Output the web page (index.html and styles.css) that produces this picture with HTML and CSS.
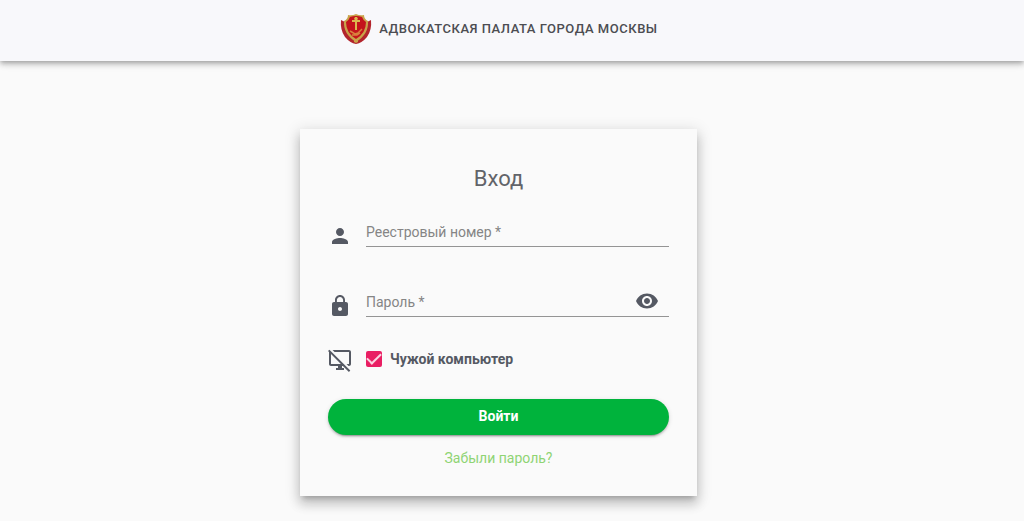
FILE: index.html
```html
<!DOCTYPE html>
<html lang="ru">
<head>
  <meta charset="UTF-8" />
  <meta name="viewport" content="width=device-width, initial-scale=1.0" />
  <title>Вход - Адвокатская палата города Москвы</title>
  <link rel="stylesheet" href="styles.css">
</head>
<body>
  <header class="header">
    <svg class="logo" viewBox="0 0 32 32" aria-hidden="true">
      <path fill="#b3242c" d="M1 7 L5 9 L27 9 L31 7 Q32 17 27 24 Q22 30 16 31 Q10 30 5 24 Q0 17 1 7z"/>
      <path fill="#c9a24a" d="M8 2 Q12 3 16 1 Q20 3 24 2 Q24 6 28 8 Q29 21 16 29 Q3 21 4 8 Q8 6 8 2z"/>
      <path fill="#c4141c" d="M10 4 Q16 2 22 4 Q23 7 26 9 Q26 20 16 26 Q6 20 6 9 Q9 7 10 4z"/>
      <path fill="#dcb84f" d="M15 4h2l1 2-1 1h3v2h-3v8h-2V9h-3V7h3l-1-1z"/>
      <path fill="none" stroke="#d9803d" stroke-width="1.500" d="M10 18l5 3 3-1 4-4M12 22l5 0 3-2"/>
      <path fill="#c9a24a" d="M14 26h4v3l-2 1-2-1z"/>
    </svg>
    <span class="header-title">Адвокатская палата города Москвы</span>
  </header>

  <main class="content">
    <form class="card">
      <h1>Вход</h1>

      <div class="row">
        <svg class="icon" viewBox="0 0 24 24" aria-hidden="true"><path d="M12 12c2.21 0 4-1.79 4-4s-1.79-4-4-4-4 1.79-4 4 1.79 4 4 4zm0 2c-2.67 0-8 1.34-8 4v2h16v-2c0-2.66-5.33-4-8-4z"/></svg>
        <div class="field">
          <input id="number" type="text" placeholder="Реестровый номер *" aria-label="Реестровый номер" required />
        </div>
      </div>

      <div class="row">
        <svg class="icon" viewBox="0 0 24 24" aria-hidden="true"><path d="M18 8h-1V6c0-2.76-2.24-5-5-5S7 3.24 7 6v2H6c-1.1 0-2 .9-2 2v10c0 1.1.9 2 2 2h12c1.1 0 2-.9 2-2V10c0-1.1-.9-2-2-2zm-6 9c-1.1 0-2-.9-2-2s.9-2 2-2 2 .9 2 2-.9 2-2 2zm3.100-9H8.900V6c0-1.710 1.390-3.100 3.100-3.100s3.100 1.390 3.100 3.100v2z"/></svg>
        <div class="field">
          <input id="password" type="password" placeholder="Пароль *" aria-label="Пароль" required />
          <button class="show-password" type="button" aria-label="Показать пароль">
            <svg class="icon" viewBox="0 0 24 24" aria-hidden="true"><path d="M12 4.500C7 4.500 2.730 7.610 1 12c1.730 4.390 6 7.500 11 7.500s9.270-3.110 11-7.500c-1.730-4.390-6-7.500-11-7.500zM12 17c-2.760 0-5-2.240-5-5s2.240-5 5-5 5 2.240 5 5-2.240 5-5 5zm0-8c-1.660 0-3 1.340-3 3s1.340 3 3 3 3-1.340 3-3-1.340-3-3-3z"/></svg>
          </button>
        </div>
      </div>

      <div class="row row-check">
        <svg class="icon" viewBox="0 0 24 24" aria-hidden="true"><path d="M1.410 1.690L0 3.100l1 .990V16c0 1.100.890 2 1.990 2H10v2H8v2h8v-2h-2v-2h.900l6 6 1.410-1.410L1.410 1.690zM2.990 16V6.090L12.900 16H2.990zM4.550 2l2 2H21v12h-2.450l2 2h.440c1.100 0 2.010-.900 2.010-2V4c0-1.100-.900-2-2-2H4.550z"/></svg>
        <label class="check"><input type="checkbox" checked />Чужой компьютер</label>
      </div>

      <button class="submit" type="submit">Войти</button>
      <a class="forgot" href="#">Забыли пароль?</a>
    </form>
  </main>
</body>
</html>
```
FILE: styles.css
```css
:root {
  --bg: #fafafa;
  --fg: #555963;
  --accent: #e91e63;
  --green: #00b33c;
}

* { box-sizing: border-box; }

body {
  margin: 0;
  font-family: Roboto, "Liberation Sans", sans-serif;
  font-size: 14px;
  background: var(--bg);
  color: var(--fg);
}

.header {
  display: flex;
  align-items: center;
  justify-content: center;
  gap: 7px;
  height: 61px;
  padding: 0 26px 4px 0;
  background: #f8f8fb;
  box-shadow: 0 2px 4px -1px rgba(0, 0, 0, 0.2), 0 4px 5px 0 rgba(0, 0, 0, 0.14), 0 1px 10px 0 rgba(0, 0, 0, 0.12);
}

.logo {
  width: 32px;
  height: 32px;
}

.header-title {
  font-size: 13px;
  font-weight: 500;
  letter-spacing: 0.04em;
  text-transform: uppercase;
  color: #4c4d52;
}

.content {
  display: flex;
  justify-content: center;
  padding: 68px 27px 25px 0;
}

.card {
  display: flex;
  flex-direction: column;
  width: 397px;
  padding: 37px 28px 28px;
  background: var(--bg);
  box-shadow: 0 5px 5px -3px rgba(0, 0, 0, 0.2), 0 8px 10px 1px rgba(0, 0, 0, 0.14), 0 3px 14px 2px rgba(0, 0, 0, 0.12);
}

h1 {
  margin: 0 0 32px;
  font-size: 22px;
  font-weight: 400;
  line-height: 26px;
  text-align: center;
  color: #626469;
}

.icon {
  display: block;
  flex: none;
  width: 24px;
  height: 24px;
  fill: var(--fg);
}

.row {
  display: flex;
  align-items: flex-start;
  gap: 14px;
  height: 24px;
  margin-bottom: 46px;
}

.row-check { margin: -16px 0 27px; }

.field {
  display: flex;
  flex: 1;
  height: 23px;
  border-bottom: 1px solid #949494;
}

.field input {
  flex: 1;
  min-width: 0;
  padding: 0 0 6px;
  border: none;
  outline: none;
  background: none;
  font: inherit;
  color: var(--fg);
}

.field input::placeholder { color: #858585; }

.show-password {
  margin: -5px 10px 0 0;
  padding: 0;
  height: 24px;
  border: none;
  background: none;
  cursor: pointer;
}

.check {
  display: flex;
  align-items: center;
  gap: 8px;
  height: 22px;
  font-weight: 700;
}

.check input {
  appearance: none;
  display: grid;
  place-items: center;
  width: 16px;
  height: 16px;
  margin: 0;
  border-radius: 2px;
  background: var(--accent);
}

.check input:checked::before {
  content: "";
  width: 12px;
  height: 6px;
  margin-bottom: 4px;
  border: solid #fbd5e1;
  border-width: 0 0 2px 2px;
  transform: rotate(-45deg);
}

.submit {
  height: 36px;
  padding: 0 0 2px;
  border: none;
  border-radius: 18px;
  background: var(--green);
  box-shadow: 0 3px 1px -2px rgba(0, 0, 0, 0.2), 0 2px 2px 0 rgba(0, 0, 0, 0.14), 0 1px 5px 0 rgba(0, 0, 0, 0.12);
  font: inherit;
  font-weight: 700;
  color: #fff;
  cursor: pointer;
}

.forgot {
  align-self: center;
  margin-top: 13px;
  line-height: 20px;
  color: #8fd474;
  text-decoration: none;
}
```
